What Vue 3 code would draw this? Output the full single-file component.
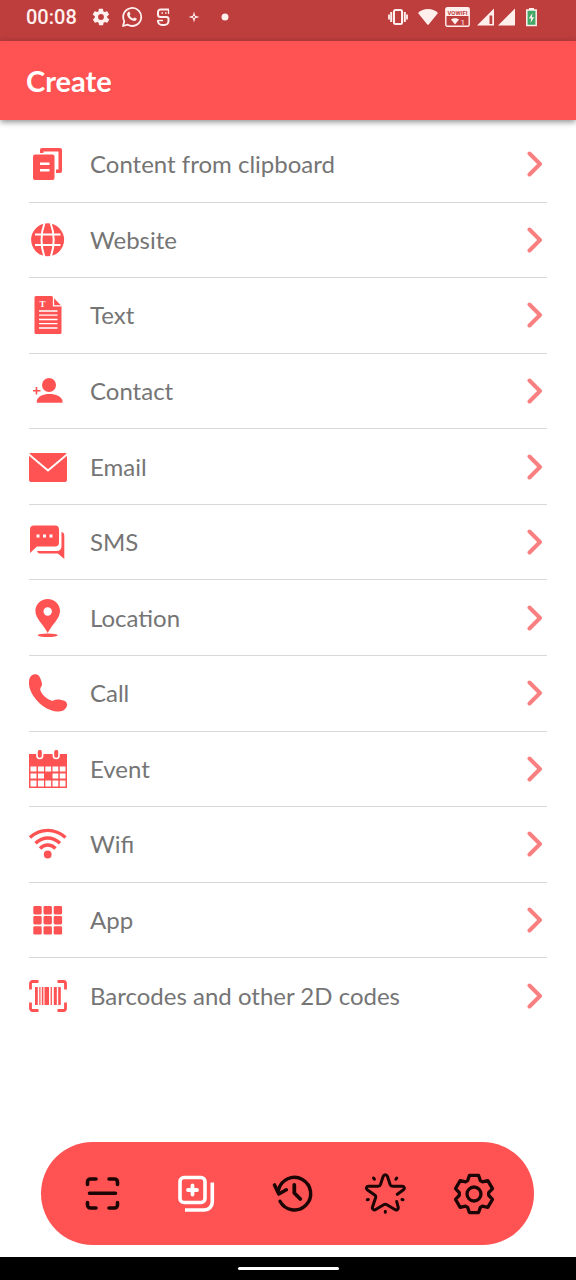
<template>
  <div class="screen">
    <div class="status-bar">
      <div class="status-left">
        <span class="clock">00:08</span>
        <svg width="20" height="20" viewBox="0 0 24 24" fill="currentColor">
          <path d="M19.4 13c0-.3.1-.6.1-1s0-.7-.1-1l2.1-1.6c.2-.2.3-.5.1-.7l-2-3.4c-.1-.2-.4-.3-.6-.2l-2.5 1c-.5-.4-1.1-.7-1.7-1l-.4-2.6c0-.3-.2-.5-.5-.5h-4c-.3 0-.5.2-.5.5l-.4 2.6c-.6.3-1.2.6-1.7 1l-2.5-1c-.2-.1-.5 0-.6.2l-2 3.4c-.1.2-.1.5.1.7L4.6 11c0 .3-.1.6-.1 1s0 .7.1 1l-2.1 1.6c-.2.2-.3.5-.1.7l2 3.4c.1.2.4.3.6.2l2.5-1c.5.4 1.1.7 1.7 1l.4 2.6c0 .3.2.5.5.5h4c.3 0 .5-.2.5-.5l.4-2.6c.6-.3 1.2-.6 1.7-1l2.5 1c.2.1.5 0 .6-.2l2-3.4c.1-.2.1-.5-.1-.7zM12 15.500a3.500 3.500 0 1 1 0-7 3.500 3.500 0 0 1 0 7z" />
        </svg>
        <svg width="22" height="22" viewBox="0 0 22 22">
          <path d="M1 20l1.300-4.800A9 9 0 1 1 5.700 18.700z" fill="none" stroke="currentColor" stroke-width="1.800" stroke-linejoin="round" />
          <path d="M6.200 5.900c.7-.6 1.300-.4 1.600.3l.6 1.500c.2.600-.8 1.300-.7 1.700.7 1.400 1.800 2.400 3.200 3 .5.100 1.100-1.200 1.700-1l1.700.8c.6.300.5.900.1 1.600-.7 1.200-2.200 1.500-3.900.8-2.400-1-4.400-2.900-5.200-5.200-.5-1.400 0-2.700.9-3.500z" fill="currentColor" />
        </svg>
        <svg width="18" height="20" viewBox="0 0 18 20" fill="none" stroke="currentColor" stroke-width="2">
          <path d="M14 2.500H5.500A2.500 2.500 0 0 0 3 5v2.500A2.500 2.500 0 0 0 5.500 10h6a2 2 0 0 1 2 2v2a4 4 0 0 1-4 4H7a4 4 0 0 1-4-4V13" />
          <path d="M13.500 3v4M6.500 6H8M10 6h1.500M3 13.500h5" stroke-width="1.300" />
        </svg>
        <svg width="20" height="20" viewBox="0 0 20 20">
          <path d="M10 4.500l1.200 4.300L15.500 10l-4.300 1.200L10 15.500l-1.200-4.300L4.500 10l4.300-1.200z" fill="currentColor" />
          <circle cx="10" cy="10" r="1" fill="#be3d3d" />
        </svg>
        <svg width="20" height="20" viewBox="0 0 20 20">
          <circle cx="10" cy="10" r="3.500" fill="currentColor" />
        </svg>
      </div>
      <div class="status-right">
        <svg width="23" height="20" viewBox="0 0 23 20" fill="none" stroke="currentColor">
          <rect x="6" y="3" width="8" height="14" rx="1.500" stroke-width="2" />
          <path d="M3.200 5v10M16.800 5v10" stroke-width="2" />
          <path d="M1 7.500v5M19 7.500v5" stroke-width="1.800" />
        </svg>
        <svg width="20" height="20" viewBox="0 0 20 20">
          <path d="M0 6C5 .8 15 .8 20 6L10.700 17.500a1 1 0 0 1-1.400 0z" fill="currentColor" />
        </svg>
        <svg width="25" height="20" viewBox="0 0 25 20">
          <rect x=".8" y=".8" width="23.400" height="18.400" rx="1.500" fill="none" stroke="currentColor" stroke-width="1.400" />
          <path d="M1 1h23v8H1z" fill="currentColor" />
          <text class="vowifi" x="12.500" y="8" text-anchor="middle">VOWIFI</text>
          <path d="M6 12.500c2.200-1.800 5.800-1.800 8 0L10 17.500z" fill="currentColor" />
          <text class="sim" x="15.500" y="17.500">1</text>
        </svg>
        <svg width="41" height="20" viewBox="0 0 41 20">
          <path d="M0 18.500L17 1.500v17z" fill="currentColor" />
          <path d="M12.500 8.500h2.800v8.500h-2.800z" fill="#be3d3d" />
          <path d="M21 18.500L38 1.500v17z" fill="currentColor" />
        </svg>
        <svg width="13" height="20" viewBox="0 0 13 20">
          <path d="M4 1h5v2H4z" fill="currentColor" />
          <rect x="1.800" y="3" width="9.400" height="15.500" fill="#43a866" stroke="currentColor" stroke-width="1.500" />
          <path d="M7.500 6L3.800 11.500h2.400L5.500 16l3.700-5.800H6.900z" fill="currentColor" />
        </svg>
      </div>
    </div>

    <header class="app-bar">
      <h1>Create</h1>
    </header>

    <ul class="list">
      <li v-for="item in items" :key="item.label">
        <button type="button" class="row">
          <svg class="row-icon" viewBox="0 0 38 38" aria-hidden="true" v-html="item.icon"></svg>
          <span class="label">{{ item.label }}</span>
          <svg class="chevron" viewBox="0 0 16 28" aria-hidden="true">
            <path d="M2.500 3.500L13 14 2.500 24.500" />
          </svg>
        </button>
      </li>
    </ul>

    <nav class="tab-bar">
      <button
        v-for="tab in tabs"
        :key="tab.name"
        type="button"
        class="tab"
        :class="{ active: tab.name === activeTab }"
        :aria-label="tab.name"
        @click="activeTab = tab.name"
      >
        <svg viewBox="0 0 42 42" aria-hidden="true" v-html="tab.icon"></svg>
      </button>
    </nav>

    <div class="system-bar">
      <span class="home-pill"></span>
    </div>
  </div>
</template>

<script setup>
import { ref } from 'vue'

const activeTab = ref('Create')

// gear outline with six teeth, centred in a 42x42 box
function gearPath() {
  const points = []
  for (let i = 0; i < 6; i++) {
    const corners = [
      [-25, 14.8],
      [-14, 19.2],
      [14, 19.2],
      [25, 14.8],
    ]
    for (const [offset, r] of corners) {
      const a = ((i * 60 + offset - 90) * Math.PI) / 180
      points.push(`${(21 + r * Math.cos(a)).toFixed(1)} ${(21 + r * Math.sin(a)).toFixed(1)}`)
    }
  }
  return `M${points.join('L')}Z`
}

const items = [
  {
    label: 'Content from clipboard',
    icon: `<path d="M13 3h18a2 2 0 0 1 2 2v21a2 2 0 0 1-2 2h-4v-3.500h2.500v-18h-15V8H11V5a2 2 0 0 1 2-2z"/>
      <rect x="4" y="9.500" width="21.500" height="25.500" rx="2"/>
      <path d="M11 17.500h9.500v2.500H11zM11 24h9.500v2.500H11z" fill="#fff"/>`,
  },
  {
    label: 'Website',
    icon: `<circle cx="18.600" cy="18.800" r="16.500"/>
      <g fill="none" stroke="#fff" stroke-width="2">
        <path d="M6 13.500h25.500M6 24h25.500M15.500 2Q9.500 18.800 15.500 36M21.700 2Q27.700 18.800 21.700 36"/>
      </g>`,
  },
  {
    label: 'Text',
    icon: `<path d="M7 0h16l9.500 10v26.500a1.500 1.500 0 0 1-1.500 1.500H7a1.500 1.500 0 0 1-1.500-1.500v-35A1.500 1.500 0 0 1 7 0z"/>
      <path d="M24.500 0v9.800h8M10 15h18.500M10 19.200h18.500M10 23.500h18.500M10 27.700h18.500M10 32h18.500" fill="none" stroke="#fff" stroke-width="1.300"/>
      <text x="13.500" y="11" text-anchor="middle" font-family="Liberation Serif, serif" font-weight="700" font-size="9" fill="#fff">T</text>`,
  },
  {
    label: 'Contact',
    icon: `<circle cx="20" cy="13" r="7"/>
      <path d="M7.800 30.800v-2C8.500 24.500 14 22 20.500 22s12 2.500 13 6.800v2z"/>
      <path d="M7.500 15v7.500M4 18.700h7.500" fill="none" stroke="#ff5353" stroke-width="1.600"/>`,
  },
  {
    label: 'Email',
    icon: `<rect x="0" y="5" width="38" height="29" rx="2"/>
      <path d="M0 6.500l19 16 19-16" fill="none" stroke="#fff" stroke-width="1.800"/>`,
  },
  {
    label: 'SMS',
    icon: `<path d="M5 2.500h21a4 4 0 0 1 4 4v13a4 4 0 0 1-4 4H8L1 30V6.500a4 4 0 0 1 4-4z"/>
      <path d="M32.500 9c1.800.3 2.800 1.500 2.800 3.500V36l-6.500-5.500H11c-1.500 0-2.500-.8-3-2.500h20a4.500 4.500 0 0 0 4.500-4.500z"/>
      <path d="M7.500 11.500h3v3h-3zM14 11.500h3v3h-3zM20.500 11.500h3v3h-3z" fill="#fff"/>`,
  },
  {
    label: 'Location',
    icon: `<path d="M18.700 0C25.500 0 31 5.200 31 12c0 7.500-8 13.500-12.300 22C14.500 25.500 6.400 19.500 6.400 12c0-6.800 5.500-12 12.300-12z"/>
      <ellipse cx="18.700" cy="36.200" rx="10" ry="1.800"/>
      <circle cx="18.700" cy="12.500" r="4.200" fill="#fff"/>`,
  },
  {
    label: 'Call',
    icon: `<path d="M2.500 1.500C5 -.5 8.500 -.3 10 2c1.500 2.300 2.800 5.500 3 8 .2 2.500-2.200 3.500-1.700 6 1.200 4.300 6 8.800 10.800 10.500 2.300.8 3.700-1 6.200-1 2.500 0 6 .5 8 1.800 2 1.400 2.200 4.200.8 6.500-1.800 3-5.300 3.900-8.800 3.700C14 36.500 1 21.500 0 10.500-.2 6.500.3 3.400 2.500 1.500z"/>`,
  },
  {
    label: 'Event',
    icon: `<path d="M0 4h38v34H0z"/>
      <path d="M1.500 16.500h6v5h-6zM9 16.500h6v5H9zM16.300 16.500h5.800v5h-5.800zM23.500 16.500h5.800v5h-5.800zM30.800 16.500h5.700v5h-5.700zM1.500 23.500h6v5h-6zM9 23.500h6v5H9zM23.500 23.500h5.800v5h-5.800zM30.800 23.500h5.700v5h-5.700zM1.500 30.500h6v6h-6zM9 30.500h6v6H9zM16.300 30.500h5.800v6h-5.800zM23.500 30.500h5.800v6h-5.800zM30.800 30.500h5.700v6h-5.700z" fill="#fff"/>
      <g stroke="#fff" stroke-width="1.600">
        <rect x="8" y="-1" width="5.600" height="9.500" rx="2.800"/>
        <rect x="24.400" y="-1" width="5.600" height="9.500" rx="2.800"/>
      </g>`,
  },
  {
    label: 'Wifi',
    icon: `<g fill="none" stroke="#ff5353" stroke-width="3.400">
        <path d="M1 12.500c10.500-9.500 25-9.500 35.500 0M6.500 18.200c7.500-7 17-7 24.500 0M11 23.500c4.500-4.600 11-4.600 15.500 0"/>
      </g>
      <circle cx="18.700" cy="29.500" r="3.900"/>`,
  },
  {
    label: 'App',
    icon: [5, 15, 25.2]
      .map((y) => [4.3, 14.5, 24.7].map((x) => `<rect x="${x}" y="${y}" width="8.400" height="8.400" rx="1.400"/>`).join(''))
      .join(''),
  },
  {
    label: 'Barcodes and other 2D codes',
    icon: `<g fill="none" stroke="#ff5353" stroke-width="2.800">
        <path d="M1.500 12.500V6.500a2 2 0 0 1 2-2H9.500M28.500 4.500h6a2 2 0 0 1 2 2v6M36.500 25.500v6a2 2 0 0 1-2 2h-6M9.500 33.500h-6a2 2 0 0 1-2-2v-6"/>
      </g>
      <path d="M6 10h2.800v18H6zM10.300 10h1.200v18h-1.200zM12.800 10h1.600v18h-1.600zM15.500 10h4.500v18h-4.500zM21.600 10h1.300v18h-1.300zM24.800 10h3v18h-3zM29.200 10h2.600v18h-2.600z"/>`,
  },
]

const tabs = [
  {
    name: 'Scan',
    icon: `<path d="M6.500 11.500V9a3 3 0 0 1 3-3H15M28 6h5.500a3 3 0 0 1 3 3v2.500M36.500 29.500V32a3 3 0 0 1-3 3H28M15 35H9.500a3 3 0 0 1-3-3v-2.500M8.500 20.200h26" stroke-width="3.600"/>`,
  },
  {
    name: 'Create',
    icon: `<rect x="5" y="4.500" width="25" height="25" rx="4" stroke-width="3.600"/>
      <path d="M17.500 12.500v9M13 17h9" stroke-width="3.800"/>
      <path d="M37.300 9.500V29a8 8 0 0 1-8 8H10" stroke-width="3.600" stroke-linecap="butt"/>`,
  },
  {
    name: 'History',
    icon: `<path d="M6.500 17A16.300 16.300 0 1 1 8 28.300" stroke-width="3.400"/>
      <path d="M2.500 12l4.300 9 7.500-4.200" stroke-width="3.600"/>
      <path d="M22.300 12v8l6 6" stroke-width="3.800"/>`,
  },
  {
    name: 'Favorites',
    icon: `<path d="M33.300 21.300l6.200-4.600c1.500-1.300.8-3.500-1.300-3.500H28.500c-1.200 0-2-.6-2.400-1.700L23.500 3.500c-.8-2.300-3.600-2.300-4.400 0l-2.600 8c-.4 1.100-1.200 1.700-2.400 1.700H4.500c-2 0-2.800 2.200-1.300 3.500l7.500 5.300c1 .7 1.300 1.700.9 2.800L8.500 34c-.6 2 1.400 3.700 3.200 2.500l8-4.700c1-.6 2.200-.6 3.200 0l8 4.700c1.800 1.200 3.900-.5 3.200-2.500l-1.400-5.500" stroke-width="3"/>
      <path d="M9.500 5l.9 1.200M32.800 5l-.9 1.200M3.300 26.800l1-.3M39 26.800l-1-.3M21.300 38.300v1" stroke-width="3"/>`,
  },
  {
    name: 'Settings',
    icon: `<path d="${gearPath()}" stroke-width="3.300"/>
      <circle cx="21" cy="21" r="7" stroke-width="3.300"/>`,
  },
]
</script>

<style>
body {
  margin: 0;
}
</style>

<style scoped>
.screen {
  min-height: 100vh;
  display: flex;
  flex-direction: column;
  background: #fff;
  font-family: Lato, 'Open Sans', sans-serif;
}

svg {
  display: block;
  flex-shrink: 0;
}

button {
  border: none;
  padding: 0;
  background: none;
  font: inherit;
  color: inherit;
  cursor: pointer;
}

.status-bar {
  height: 41px;
  box-sizing: border-box;
  padding: 0 38px 8px 26px;
  display: flex;
  align-items: center;
  justify-content: space-between;
  background: #be3d3d;
  color: #fff0ee;
}

.status-left {
  display: flex;
  align-items: center;
  gap: 11px;
}

.status-right {
  display: flex;
  align-items: center;
  gap: 7px;
}

.clock {
  margin-right: 3px;
  font-family: Roboto, sans-serif;
  font-size: 20px;
  font-weight: 500;
  line-height: 24px;
}

.vowifi {
  font: 700 6px Roboto, sans-serif;
  fill: #be3d3d;
}

.sim {
  font: 400 8px Roboto, sans-serif;
  fill: currentColor;
}

.app-bar {
  height: 79px;
  padding: 0 26px;
  display: flex;
  align-items: center;
  background: #ff5353;
  box-shadow: 0 2px 6px rgba(0, 0, 0, 0.45);
}

.app-bar h1 {
  margin: 0;
  font-size: 29px;
  font-weight: 700;
  line-height: 36px;
  color: #fff;
}

.list {
  flex: 1;
  margin: 7px 29px 108px;
  padding: 0;
  display: flex;
  flex-direction: column;
  list-style: none;
}

.list li {
  flex: 1;
  display: flex;
  border-bottom: 1px solid #d8d8d8;
}

.list li:last-child {
  border-bottom-color: transparent;
}

.row {
  flex: 1;
  padding-right: 4px;
  display: flex;
  align-items: center;
  text-align: left;
}

.row-icon {
  width: 38px;
  height: 38px;
  fill: #ff5353;
}

.label {
  flex: 1;
  margin-left: 23px;
  font-size: 24px;
  line-height: 32px;
  color: #757575;
}

.chevron {
  width: 16px;
  height: 28px;
  fill: none;
  stroke: #f98080;
  stroke-width: 4;
  stroke-linecap: round;
  stroke-linejoin: round;
}

.tab-bar {
  height: 103px;
  margin: 0 42px 12px 41px;
  padding: 0 14px 0 15px;
  display: grid;
  grid-template-columns: 92fr 96fr 98fr 86fr 92fr;
  border-radius: 52px;
  background: #ff5353;
}

.tab {
  display: flex;
  align-items: center;
  justify-content: center;
  color: #1c0505;
}

.tab.active {
  color: #fff;
}

.tab svg {
  width: 42px;
  height: 42px;
  fill: none;
  stroke: currentColor;
  stroke-linecap: round;
  stroke-linejoin: round;
}

.system-bar {
  height: 23px;
  display: flex;
  align-items: center;
  justify-content: center;
  background: #000;
}

.home-pill {
  width: 101px;
  height: 3px;
  border-radius: 2px;
  background: #fff;
}
</style>
